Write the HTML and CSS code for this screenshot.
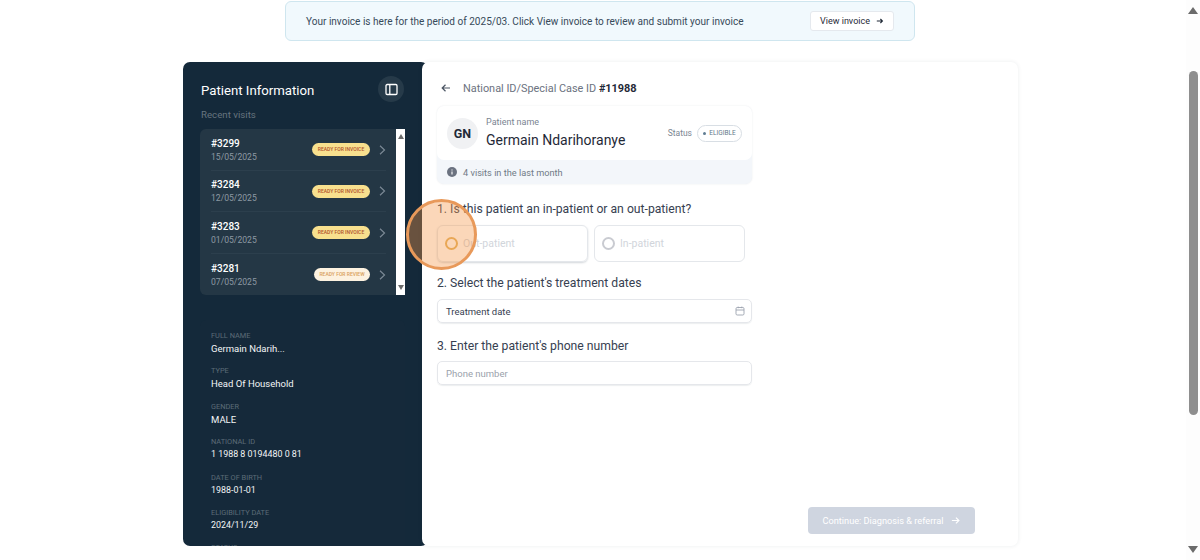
FILE: index.html
```html
<!DOCTYPE html>
<html lang="en">
<head>
    <meta charset="UTF-8">
    <title>Patient Information</title>
    <link rel="stylesheet" href="styles.css">
</head>
<body>
    <div class="page">
        <div class="banner">
            <span class="banner-text">Your invoice is here for the period of 2025/03. Click View invoice to review and submit your invoice</span>
            <button class="banner-btn">View invoice
                <svg width="8" height="8" viewBox="0 0 10 10"><path d="M1 5h7M5.5 2.5L8 5 5.5 7.5" fill="none" stroke="#1f2937" stroke-width="1.4"/></svg>
            </button>
        </div>

        <div class="shell">
            <aside class="sidebar">
                <div class="side-head">
                    <h2>Patient Information</h2>
                    <span class="collapse">
                        <svg width="13" height="13" viewBox="0 0 13 13"><rect x="1" y="1.5" width="11" height="10" rx="1.2" fill="none" stroke="#fff" stroke-width="1.3"/><path d="M4.8 1.5v10" stroke="#fff" stroke-width="1.3"/></svg>
                    </span>
                </div>
                <div class="side-sub">Recent visits</div>

                <div class="visits">
                    <div class="visit-list">
                        <div class="visit">
                            <div><div class="visit-id">#3299</div><div class="visit-date">15/05/2025</div></div>
                            <span class="tag tag-invoice">READY FOR INVOICE</span>
                            <svg class="chev" width="7" height="10" viewBox="0 0 7 10"><path d="M1 .8L5.5 5 1 9.2" fill="none" stroke="#7b8995" stroke-width="1.2"/></svg>
                        </div>
                        <div class="visit">
                            <div><div class="visit-id">#3284</div><div class="visit-date">12/05/2025</div></div>
                            <span class="tag tag-invoice">READY FOR INVOICE</span>
                            <svg class="chev" width="7" height="10" viewBox="0 0 7 10"><path d="M1 .8L5.5 5 1 9.2" fill="none" stroke="#7b8995" stroke-width="1.2"/></svg>
                        </div>
                        <div class="visit">
                            <div><div class="visit-id">#3283</div><div class="visit-date">01/05/2025</div></div>
                            <span class="tag tag-invoice">READY FOR INVOICE</span>
                            <svg class="chev" width="7" height="10" viewBox="0 0 7 10"><path d="M1 .8L5.5 5 1 9.2" fill="none" stroke="#7b8995" stroke-width="1.2"/></svg>
                        </div>
                        <div class="visit">
                            <div><div class="visit-id">#3281</div><div class="visit-date">07/05/2025</div></div>
                            <span class="tag tag-review">READY FOR REVIEW</span>
                            <svg class="chev" width="7" height="10" viewBox="0 0 7 10"><path d="M1 .8L5.5 5 1 9.2" fill="none" stroke="#7b8995" stroke-width="1.2"/></svg>
                        </div>
                    </div>
                    <div class="mini-scroll">
                        <span class="arrow-up"></span>
                        <span class="arrow-down"></span>
                    </div>
                </div>

                <div class="details">
                    <div class="field"><div class="field-label">FULL NAME</div><div class="field-value">Germain Ndarih...</div></div>
                    <div class="field"><div class="field-label">TYPE</div><div class="field-value">Head Of Household</div></div>
                    <div class="field"><div class="field-label">GENDER</div><div class="field-value">MALE</div></div>
                    <div class="field"><div class="field-label">NATIONAL ID</div><div class="field-value field-num">1 1988 8 0194480 0 81</div></div>
                    <div class="field"><div class="field-label">DATE OF BIRTH</div><div class="field-value field-num">1988-01-01</div></div>
                    <div class="field"><div class="field-label">ELIGIBILITY DATE</div><div class="field-value field-num">2024/11/29</div></div>
                    <div class="field"><div class="field-label">STATUS</div></div>
                </div>
            </aside>

            <main class="content">
                <div class="crumb">
                    <svg width="10" height="10" viewBox="0 0 10 10"><path d="M9 5H1.5M4.5 1.8L1.2 5l3.3 3.2" fill="none" stroke="#4b5563" stroke-width="1.2"/></svg>
                    <div class="crumb-text">National ID/Special Case ID <b>#1198880194480081</b></div>
                </div>

                <div class="patient-card">
                    <div class="patient-top">
                        <span class="avatar">GN</span>
                        <div class="patient-name">
                            <div class="small-label">Patient name</div>
                            <div class="big-name">Germain Ndarihoranye</div>
                        </div>
                        <div class="status">
                            <span class="small-label status-label">Status</span>
                            <span class="status-pill"><i></i>ELIGIBLE</span>
                        </div>
                    </div>
                    <div class="patient-foot">
                        <svg width="10" height="10" viewBox="0 0 10 10"><circle cx="5" cy="5" r="5" fill="#6b7280"/><path d="M5 4.4v3M5 2.4v1" stroke="#fff" stroke-width="1.1"/></svg>
                        4 visits in the last month
                    </div>
                </div>

                <h3 class="q q-first">1. Is this patient an in-patient or an out-patient?</h3>
                <div class="options">
                    <div class="option option-on"><span class="radio"></span>Out-patient</div>
                    <div class="option"><span class="radio"></span>In-patient</div>
                </div>

                <h3 class="q q-dates">2. Select the patient's treatment dates</h3>
                <div class="input input-date">Treatment date
                    <svg width="10" height="10" viewBox="0 0 10 10"><rect x="1" y="1.5" width="8" height="7.5" rx="1.2" fill="none" stroke="#9ca3af" stroke-width=".9"/><path d="M1 4h8M3.2.6v1.6M6.8.6v1.6" stroke="#9ca3af" stroke-width=".9"/></svg>
                </div>

                <h3 class="q q-phone">3. Enter the patient's phone number</h3>
                <div class="input input-empty">Phone number</div>

                <button class="continue">Continue: Diagnosis &amp; referral
                    <svg width="9" height="9" viewBox="0 0 10 10"><path d="M1 5h7.5M5.5 1.8L8.8 5 5.5 8.2" fill="none" stroke="#fff" stroke-width="1.3"/></svg>
                </button>
            </main>
        </div>
    </div>

    <div class="scrollbar">
        <span class="arrow-up"></span>
        <span class="thumb"></span>
        <span class="arrow-down"></span>
    </div>

    <div class="click-ring"></div>
</body>
</html>
```

FILE: styles.css
```css
html, body {
    height: 100%;
}
body {
    margin: 0;
    height: 560px;
    display: flex;
    overflow: hidden;
    background: #fff;
    font-family: 'Roboto', sans-serif;
    color: #1f2937;
}
.page {
    flex: 1;
    padding-top: 1px;
    padding-left: 14px;
    display: flex;
    flex-direction: column;
    align-items: center;
}

/* invoice banner */
.banner {
    box-sizing: border-box;
    width: 630px;
    height: 40px;
    flex: none;
    display: flex;
    align-items: center;
    justify-content: space-between;
    padding: 0 20px;
    background: #f1f9fd;
    border: 1px solid #cfe6ef;
    border-radius: 6px;
    font-size: 10.05px;
    color: #374a5a;
}
.banner-btn {
    box-sizing: border-box;
    width: 84px;
    height: 20px;
    background: #fff;
    border: 1px solid #e5e9ee;
    border-radius: 3px;
    font: inherit;
    font-size: 9px;
    color: #1f2937;
    display: flex;
    align-items: center;
    justify-content: center;
    gap: 6px;
    padding: 0;
}

.shell {
    display: flex;
    width: 835px;
    height: 484px;
    margin-top: 21px;
    margin-left: 1px;
    flex: none;
}

/* dark left panel */
.sidebar {
    box-sizing: border-box;
    width: 245px;
    flex: none;
    padding: 14px 17px 0 17px;
    margin-right: -6px;
    background: #14293a;
    border-radius: 7px;
    overflow: hidden;
    color: #fff;
}
.side-head {
    display: flex;
    align-items: center;
    justify-content: space-between;
    padding: 0 7px 0 1px;
    height: 26px;
}
.side-head h2 {
    margin: 2px 0 0;
    font-size: 13.2px;
    font-weight: 400;
}
.collapse {
    width: 26px;
    height: 26px;
    border-radius: 50%;
    background: #263a49;
    display: flex;
    align-items: center;
    justify-content: center;
}
.side-sub {
    margin-top: 7px;
    padding-left: 1px;
    font-size: 9.7px;
    color: #66747f;
    height: 20px;
}
.visits {
    display: flex;
    width: 205px;
    height: 166px;
    background: #243745;
    border-radius: 6px 0 0 6px;
}
.visit-list {
    flex: 1;
    padding: 0 10px 0 11px;
}
.visit {
    height: 41.5px;
    display: flex;
    align-items: center;
    border-bottom: 1px solid #2c3f4d;
    box-sizing: border-box;
    padding-top: 3px;
}
.visit:last-child {
    border-bottom: none;
}
.visit > div {
    flex: 1;
}
.visit-id {
    font-size: 10px;
    font-weight: 500;
    line-height: 13px;
}
.visit-date {
    font-size: 8.6px;
    color: #8d99a3;
    line-height: 15px;
}
.tag {
    font-size: 5px;
    height: 13px;
    line-height: 13px;
    border-radius: 7px;
    text-align: center;
    font-weight: 500;
    margin-top: -2px;
}
.tag-invoice {
    width: 58px;
    background: #f8e08e;
    color: #b0532c;
}
.tag-review {
    width: 56px;
    background: #fdf2e0;
    color: #d9a05e;
}
.chev {
    margin: -2px 0 0 9px;
}
.mini-scroll {
    width: 9px;
    background: #fff;
    display: flex;
    flex-direction: column;
    justify-content: space-between;
    align-items: center;
    padding: 5px 0;
    box-sizing: border-box;
}

/* shared scroll arrows */
.arrow-up, .arrow-down {
    width: 0;
    height: 0;
    border-left: 3.5px solid transparent;
    border-right: 3.5px solid transparent;
}
.arrow-up {
    border-bottom: 5px solid #6b6b6b;
}
.arrow-down {
    border-top: 5px solid #6b6b6b;
}

.details {
    width: 205px;
    box-sizing: border-box;
    margin-top: 25px;
    padding: 11px 11px 0;
    background: #15293a;
    border-radius: 6px;
}
.field {
    height: 35.4px;
}
.field-label {
    font-size: 7.4px;
    color: #5c6b77;
    line-height: 10px;
}
.field-value {
    font-size: 9.5px;
    line-height: 15px;
    margin-top: 0;
    color: #f3f5f6;
}
.field-num {
    font-size: 8.9px;
}

/* white right panel */
.content {
    flex: 1;
    position: relative;
    box-sizing: border-box;
    padding: 16px 15px 0;
    background: #fff;
    border-radius: 7px;
    box-shadow: 0 0 4px rgba(30, 50, 70, .09);
}
.crumb {
    display: flex;
    align-items: center;
    gap: 12px;
    height: 20px;
    padding-left: 4px;
}
.crumb-text {
    width: 174px;
    overflow: hidden;
    white-space: nowrap;
    font-size: 10.9px;
    color: #6b7280;
}
.crumb-text b {
    color: #1f2937;
    font-weight: 700;
}
.patient-card {
    width: 315px;
    margin-top: 8px;
    background: #f3f6fa;
    border-radius: 7px;
    box-shadow: 0 0 2px rgba(30, 50, 70, .1);
}
.patient-top {
    height: 54px;
    background: #fff;
    border-radius: 7px;
    display: flex;
    align-items: center;
    padding: 0 10px;
}
.avatar {
    width: 31px;
    height: 31px;
    border-radius: 50%;
    background: #f0f1f3;
    font-size: 12.5px;
    font-weight: 700;
    display: flex;
    align-items: center;
    justify-content: center;
    margin-right: 8px;
}
.patient-name {
    flex: 1;
}
.small-label {
    font-size: 9px;
    color: #7b8592;
}
.status-label {
    font-size: 8.5px;
}
.big-name {
    font-size: 14px;
    font-weight: 400;
    color: #1f2937;
    line-height: 20px;
    margin-top: 3px;
}
.status {
    display: flex;
    align-items: center;
    gap: 5px;
}
.status-pill {
    box-sizing: border-box;
    width: 45px;
    height: 17px;
    border: 1px solid #d8dee4;
    border-radius: 9px;
    font-size: 6.5px;
    color: #64798a;
    display: flex;
    align-items: center;
    justify-content: center;
    gap: 3px;
}
.status-pill i {
    width: 3px;
    height: 3px;
    border-radius: 50%;
    background: #5f7c92;
}
.patient-foot {
    height: 24px;
    display: flex;
    align-items: center;
    gap: 6px;
    padding-left: 10px;
    font-size: 9.2px;
    color: #717b87;
}
.q {
    margin: 0;
    height: 22px;
    margin-top: 10px;
    font-size: 12.2px;
    line-height: 22px;
    font-weight: 400;
    color: #374151;
}
.q-first {
    margin-top: 14px;
}
.q-dates {
    margin-top: 10px;
}
.q-phone {
    margin-top: 12px;
}
.options {
    display: flex;
    gap: 6px;
    margin-top: 5px;
}
.option {
    box-sizing: border-box;
    width: 151px;
    height: 37px;
    border: 1px solid #e4e7eb;
    border-radius: 6px;
    display: flex;
    align-items: center;
    gap: 5px;
    padding-left: 7px;
    font-size: 10.5px;
    color: #d1d5db;
}
.option-on {
    box-shadow: 0 1px 2px rgba(30, 50, 70, .2);
}
.radio {
    box-sizing: border-box;
    width: 13px;
    height: 13px;
    border: 2.5px solid #c9cbd1;
    border-radius: 50%;
}
.option-on .radio {
    border-color: #e2b25f;
}
.input {
    box-sizing: border-box;
    width: 315px;
    height: 24px;
    border: 1px solid #e5e7eb;
    border-radius: 5px;
    box-shadow: 0 1px 1px rgba(30, 50, 70, .08);
    display: flex;
    align-items: center;
    justify-content: space-between;
    padding: 0 6px 0 8px;
    font-size: 9.5px;
}
.input-date {
    margin-top: 5px;
    color: #374151;
}
.input-empty {
    margin-top: 4px;
    color: #9aa1ab;
}
.continue {
    position: absolute;
    left: 386px;
    top: 445px;
    width: 167px;
    height: 27px;
    border: none;
    border-radius: 4px;
    background: #cfd5e0;
    color: #fff;
    font: inherit;
    font-size: 9.2px;
    white-space: nowrap;
    display: flex;
    align-items: center;
    justify-content: center;
    gap: 8px;
}

/* window scrollbar */
.scrollbar {
    width: 14px;
    flex: none;
    display: flex;
    flex-direction: column;
    align-items: center;
    background: #fdfdfd;
    padding-top: 7px;
    box-sizing: border-box;
    height: 560px;
}
.scrollbar .arrow-up {
    border-left-width: 5px;
    border-right-width: 5px;
    border-bottom: 7px solid #6b6b6b;
}
.scrollbar .thumb {
    width: 9px;
    height: 344px;
    margin-top: 57px;
    background: #8e8e8e;
    border-radius: 5px;
}
.scrollbar .arrow-down {
    margin-top: 131px;
    border-left-width: 5px;
    border-right-width: 5px;
    border-top: 7px solid #6b6b6b;
}

/* screen recorder click marker */
.click-ring {
    position: absolute;
    left: 406px;
    top: 199px;
    width: 71px;
    height: 71px;
    box-sizing: border-box;
    border: 3px solid #e8995a;
    border-radius: 50%;
    background: rgba(245, 150, 70, .38);
}
```
